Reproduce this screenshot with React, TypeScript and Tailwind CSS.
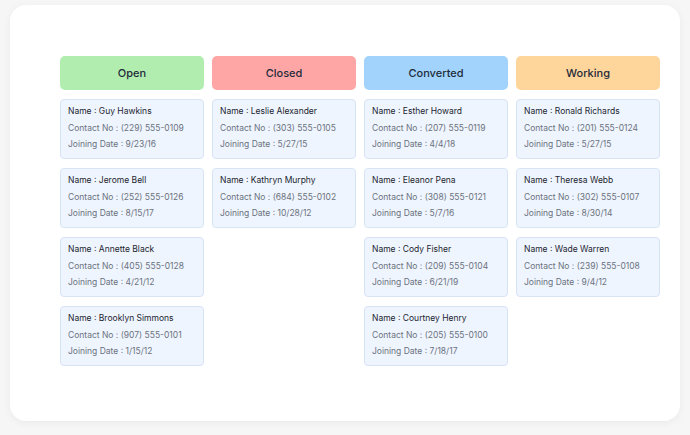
const cols = [
  { t: "Open", c: "bg-[#b2edb0]", items: [["Guy Hawkins","(229) 555-0109","9/23/16"],["Jerome Bell","(252) 555-0126","8/15/17"],["Annette Black","(405) 555-0128","4/21/12"],["Brooklyn Simmons","(907) 555-0101","1/15/12"]] },
  { t: "Closed", c: "bg-[#fea6a6]", items: [["Leslie Alexander","(303) 555-0105","5/27/15"],["Kathryn Murphy","(684) 555-0102","10/28/12"]] },
  { t: "Converted", c: "bg-[#a1d3fd]", items: [["Esther Howard","(207) 555-0119","4/4/18"],["Eleanor Pena","(308) 555-0121","5/7/16"],["Cody Fisher","(209) 555-0104","6/21/19"],["Courtney Henry","(205) 555-0100","7/18/17"]] },
  { t: "Working", c: "bg-[#fed59b]", items: [["Ronald Richards","(201) 555-0124","5/27/15"],["Theresa Webb","(302) 555-0107","8/30/14"],["Wade Warren","(239) 555-0108","9/4/12"]] },
];
export default function App() {
  return (
    <div className="w-[690px] h-[435px] bg-[#f6f6f7] pt-[5px] pl-[10px]" style={{ fontFamily: "Inter, sans-serif" }}>
      <div className="w-[670px] h-[416px] bg-white rounded-[16px] shadow-[0_2px_8px_rgba(0,0,0,0.05)] pt-[51px] pl-[50px] flex gap-[8px]">
        {cols.map((col) => (
          <div key={col.t} className="w-[144px] flex flex-col gap-[9px]">
            <div className={`${col.c} h-[34px] rounded-[5px] flex items-center justify-center text-[11px] text-[#1e2b3a] font-medium`}>{col.t}</div>
            {col.items.map((it) => (
              <div key={it[0]} className="h-[60px] bg-[#eff5fe] border border-[#d8e4f6] rounded-[4px] pl-[7px] pt-[5px] flex flex-col gap-[4.5px] text-[8.5px] leading-[12px]">
                <div className="text-[#1c2530]">Name : {it[0]}</div>
                <div className="text-[#6b7280]">Contact No : {it[1]}</div>
                <div className="text-[#6b7280]">Joining Date : {it[2]}</div>
              </div>
            ))}
          </div>
        ))}
      </div>
    </div>
  );
}
